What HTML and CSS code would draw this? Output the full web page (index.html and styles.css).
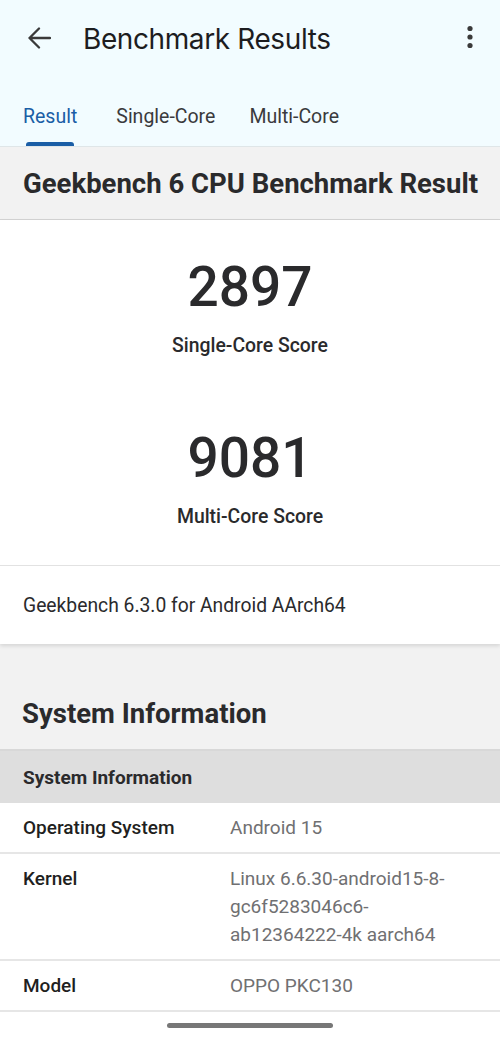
FILE: index.html
```html
<!DOCTYPE html>
<html>
<head>
<meta charset="utf-8">
<link rel="stylesheet" href="styles.css">
</head>
<body>
<div class="app">
  <header class="topbar">
    <div class="toolbar">
      <svg class="back" width="24" height="22" viewBox="0 0 24 22"><path d="M23 11H2.5M12 1.5L2.5 11l9.5 9.5" fill="none" stroke="#3a3a3a" stroke-width="2.3" stroke-linecap="round" stroke-linejoin="round"/></svg>
      <h1 class="title">Benchmark Results</h1>
      <svg class="more" width="8" height="24" viewBox="0 0 8 24"><circle cx="4" cy="3.5" r="2.6" fill="#3a3a3a"/><circle cx="4" cy="12" r="2.6" fill="#3a3a3a"/><circle cx="4" cy="20.5" r="2.6" fill="#3a3a3a"/></svg>
    </div>
    <nav class="tabs">
      <div class="tab active">Result<span class="indicator"></span></div>
      <div class="tab t2">Single-Core</div>
      <div class="tab t3">Multi-Core</div>
    </nav>
  </header>
  <main class="content">
    <div class="section-head">Geekbench 6 CPU Benchmark Result</div>
    <div class="card">
      <div class="scores">
        <div class="score">
          <div class="num">2897</div>
          <div class="label">Single-Core Score</div>
        </div>
        <div class="score">
          <div class="num">9081</div>
          <div class="label">Multi-Core Score</div>
        </div>
      </div>
      <div class="version">Geekbench 6.3.0 for Android AArch64</div>
    </div>
    <h2 class="big-head">System Information</h2>
    <div class="table">
      <div class="sub-head">System Information</div>
      <div class="row"><div class="key">Operating System</div><div class="val">Android 15</div></div>
      <div class="row"><div class="key">Kernel</div><div class="val">Linux 6.6.30-android15-8-<br>gc6f5283046c6-<br>ab12364222-4k aarch64</div></div>
      <div class="row"><div class="key">Model</div><div class="val">OPPO PKC130</div></div>
    </div>
  </main>
  <div class="navbar"><span class="handle"></span></div>
</div>
</body>
</html>
```
FILE: styles.css
```css
* { box-sizing: border-box; margin: 0; padding: 0; }
html, body { width: 500px; height: 1037px; overflow: hidden; }
body { font-family: Roboto, "Noto Sans", sans-serif; color: #2a2a2c; background: #fff; }
.app { display: flex; flex-direction: column; height: 1037px; background: #fff; }
.topbar { background: #f2fcff; border-bottom: 1px solid #dfe6e8; }
.toolbar { height: 78px; display: flex; align-items: center; padding: 0 26px 0 27px; }
.back { width: 24px; height: 22px; margin-right: 32px; margin-top: -2px; }
.title { flex: 1; font-family: Inter, Roboto, sans-serif; font-weight: 400; font-size: 28px; letter-spacing: -0.4px; color: #1d1d1f; }
.more { margin-top: -4px; }
.tabs { display: flex; height: 68px; padding-left: 23px; }
.tab { position: relative; font-size: 19.5px; color: #3a3a3c; padding-top: 27px; }
.tab.t2 { margin-left: 39px; }
.tab.t3 { margin-left: 34px; }
.tab.active { color: #1a5ea6; }
.indicator { position: absolute; left: 3px; right: 3px; bottom: 0; height: 4px; background: #1a5ea6; border-radius: 3px 3px 0 0; }
.content { background: #f2f2f2; }
.section-head { height: 73px; display: flex; align-items: center; padding-left: 23px; font-size: 27.5px; font-weight: 700; color: #2a2a2c; border-bottom: 1px solid #d4d4d4; }
.card { background: #fff; box-shadow: 0 2px 4px rgba(0,0,0,0.12); }
.scores { display: flex; flex-direction: column; align-items: center; padding: 34px 0 37px; gap: 68px; border-bottom: 1px solid #e2e2e2; }
.score { display: flex; flex-direction: column; align-items: center; }
.num { font-size: 55px; font-weight: 500; line-height: 66px; color: #2a2a2c; }
.label { font-size: 19.4px; font-weight: 500; line-height: 23px; margin-top: 14px; color: #2a2a2c; }
.version { height: 78px; display: flex; align-items: center; padding-left: 23px; font-size: 19.3px; color: #2a2a2c; }
.big-head { height: 107px; display: flex; align-items: flex-end; padding: 0 0 19px 22px; font-size: 27.5px; font-weight: 700; color: #2a2a2c; border-bottom: 2px solid #d8d8d8; }
.table { background: #fff; }
.sub-head { background: #dedede; height: 52px; display: flex; align-items: center; padding-left: 23px; font-size: 19px; font-weight: 700; color: #2a2a2c; }
.row { display: flex; padding: 11px 0 10px 23px; border-bottom: 2px solid #e6e6e6; font-size: 19px; line-height: 28px; }
.key { width: 207px; font-weight: 500; color: #1f1f21; }
.val { color: #707072; }
.navbar { flex: 1; background: #fff; display: flex; justify-content: center; align-items: center; }
.handle { width: 166px; height: 5px; border-radius: 3px; background: #777; margin-top: 1px; }
```
